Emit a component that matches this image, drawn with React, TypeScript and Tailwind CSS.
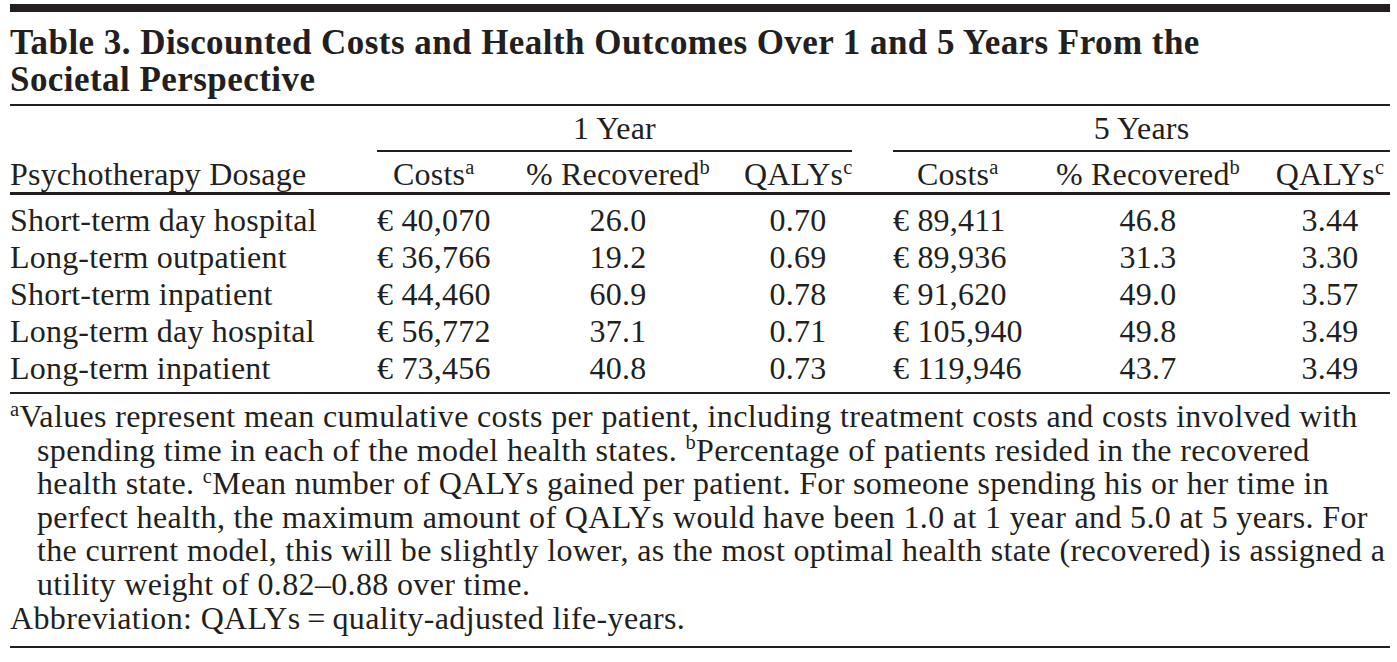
import React from "react";

const grid =
  "grid grid-cols-[368px_127px_226px_121px_41px_147px_230px_120px] items-center";

const rows: string[][] = [
  ["Short-term day hospital", "€ 40,070", "26.0", "0.70", "€ 89,411", "46.8", "3.44"],
  ["Long-term outpatient", "€ 36,766", "19.2", "0.69", "€ 89,936", "31.3", "3.30"],
  ["Short-term inpatient", "€ 44,460", "60.9", "0.78", "€ 91,620", "49.0", "3.57"],
  ["Long-term day hospital", "€ 56,772", "37.1", "0.71", "€ 105,940", "49.8", "3.49"],
  ["Long-term inpatient", "€ 73,456", "40.8", "0.73", "€ 119,946", "43.7", "3.49"],
];

function Sup({ children }: { children: React.ReactNode }) {
  return <sup className="text-[0.64em] top-[-0.55em]">{children}</sup>;
}

export default function App() {
  return (
    <div className="w-[1397px] h-[662px] overflow-hidden bg-white text-[#231f20] font-['Liberation_Serif','Times_New_Roman',serif]">
      <div className="ml-[10px] w-[1380px] pt-[4px]">
        <div className="h-[8px] bg-[#231f20]" />
        <div className="pt-[12px] pb-[6px] text-[35px] leading-[37px] font-bold tracking-[0.45px] whitespace-nowrap">
          <div>Table 3. Discounted Costs and Health Outcomes Over 1 and 5 Years From the</div>
          <div>Societal Perspective</div>
        </div>
        <div className="h-[2px] bg-[#231f20]" />

        <div className="text-[32px] tracking-[0.2px] whitespace-nowrap">
          <div className="flex pt-[7px] leading-[30px]">
            <div className="w-[367px]" />
            <div className="w-[475px] pb-[7px] text-center border-b-2 border-[#231f20]">1 Year</div>
            <div className="w-[41px]" />
            <div className="w-[497px] pb-[7px] text-center border-b-2 border-[#231f20]">5 Years</div>
          </div>

          <div className={`${grid} h-[43px] pt-[4px] leading-[37px] border-b-[3px] border-[#231f20]`}>
            <div>Psychotherapy Dosage</div>
            <div className="pl-[15px]">
              Costs<Sup>a</Sup>
            </div>
            <div className="text-center">
              % Recovered<Sup>b</Sup>
            </div>
            <div className="text-center pl-[13px]">
              QALYs<Sup>c</Sup>
            </div>
            <div />
            <div className="pl-[24px]">
              Costs<Sup>a</Sup>
            </div>
            <div className="text-center pr-[14px]">
              % Recovered<Sup>b</Sup>
            </div>
            <div className="text-center">
              QALYs<Sup>c</Sup>
            </div>
          </div>

          <div className="pt-[7px] pb-[5px] border-b-2 border-[#231f20]">
            {rows.map((r) => (
              <div key={r[0]} className={`${grid} h-[37px] leading-[37px]`}>
                <div>{r[0]}</div>
                <div className="-ml-[1px]">{r[1]}</div>
                <div className="text-center">{r[2]}</div>
                <div className="text-center pl-[13px]">{r[3]}</div>
                <div />
                <div>{r[4]}</div>
                <div className="text-center pr-[14px]">{r[5]}</div>
                <div className="text-center">{r[6]}</div>
              </div>
            ))}
          </div>

          <div className="pt-[6px] pb-[11px] leading-[33.6px] tracking-[0.35px] border-b-2 border-[#231f20]">
            <div>
              <Sup>a</Sup>Values represent mean cumulative costs per patient, including treatment costs and costs involved with
            </div>
            <div className="pl-[27px]">
              spending time in each of the model health states. <Sup>b</Sup>Percentage of patients resided in the recovered
            </div>
            <div className="pl-[27px]">
              health state. <Sup>c</Sup>Mean number of QALYs gained per patient. For someone spending his or her time in
            </div>
            <div className="pl-[27px]">
              perfect health, the maximum amount of QALYs would have been 1.0 at 1 year and 5.0 at 5 years. For
            </div>
            <div className="pl-[27px]">
              the current model, this will be slightly lower, as the most optimal health state (recovered) is assigned a
            </div>
            <div className="pl-[27px]">utility weight of 0.82–0.88 over time.</div>
            <div>Abbreviation: QALYs{"\u2009=\u2009"}quality-adjusted life-years.</div>
          </div>
        </div>
      </div>
    </div>
  );
}
